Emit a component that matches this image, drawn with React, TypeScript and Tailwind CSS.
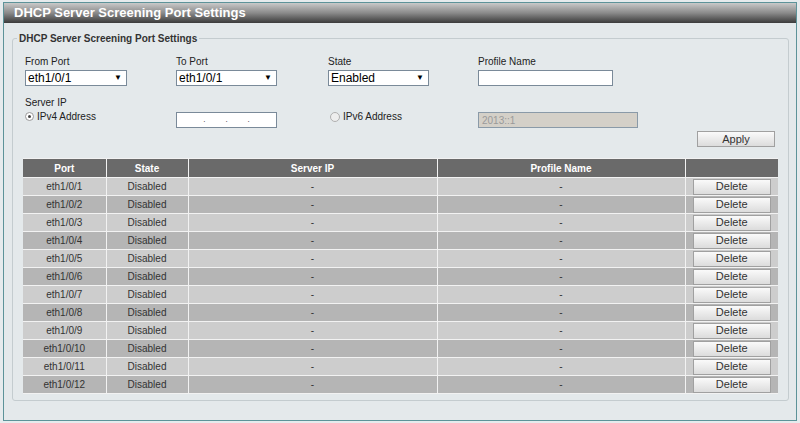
import React from "react";

const ports = Array.from({ length: 12 }, (_, i) => `eth1/0/${i + 1}`);

function Select({ value, w }: { value: string; w: string }) {
  return (
    <div className={`${w} h-[16px] bg-white border border-[#7a8a99] flex items-center justify-between pl-[2px] pr-[4px] text-[12px] text-black leading-none`}>
      <span>{value}</span>
      <span className="text-[8px]">▼</span>
    </div>
  );
}

function Btn({ label, w }: { label: string; w: string }) {
  return (
    <div className={`${w} h-[16px] border border-[#a0a0a0] bg-gradient-to-b from-[#fafafa] to-[#dcdcdc] flex items-center justify-center text-[11px] text-[#333] leading-none`}>
      {label}
    </div>
  );
}

export default function App() {
  return (
    <div className="w-[800px] h-[423px] bg-[#e6ebed] pt-[2px] pl-[3px] pr-[3px] pb-[2px] font-['Liberation_Sans',Arial,sans-serif]">
      <div className="h-full border border-[#5d9399] flex flex-col bg-[#e4e9eb]">
        <div className="h-[20px] bg-gradient-to-b from-[#c9c9c9] via-[#8a8a8a] to-[#3c3c3c] flex items-center pl-[10px] text-white font-bold text-[13px]">
          DHCP Server Screening Port Settings
        </div>
        <div className="pl-[8px] pr-[7px] pt-[8px]">
          <fieldset className="border border-[#c4cccf] rounded-[3px] pl-[12px] pr-[10px] pb-[6px]">
            <legend className="ml-[-8px] px-[2px] text-[10px] font-bold text-[#333]">DHCP Server Screening Port Settings</legend>
            <div className="flex pt-[8px] text-[10px] text-[#222]">
              <div className="w-[151px]">
                <div className="mb-[1px]">From Port</div>
                <Select value="eth1/0/1" w="w-[102px]" />
              </div>
              <div className="w-[152px]">
                <div className="mb-[1px]">To Port</div>
                <Select value="eth1/0/1" w="w-[101px]" />
              </div>
              <div className="w-[150px]">
                <div className="mb-[1px]">State</div>
                <Select value="Enabled" w="w-[101px]" />
              </div>
              <div>
                <div className="mb-[1px]">Profile Name</div>
                <div className="w-[135px] h-[16px] bg-white border border-[#7a8a99]" />
              </div>
            </div>
            <div className="mt-[9px] text-[10px] leading-[15px] text-[#222]">Server IP</div>
            <div className="flex items-start text-[10px] text-[#222]">
              <div className="w-[151px] flex items-center gap-[3px] leading-[13px]">
                <div className="w-[9px] h-[9px] rounded-full border border-[#9a9a9a] bg-white flex items-center justify-center">
                  <div className="w-[3px] h-[3px] rounded-full bg-[#444]" />
                </div>
                <span>IPv4 Address</span>
              </div>
              <div className="w-[154px] pt-[2px]">
                <div className="w-[101px] h-[16px] bg-white border border-[#7a8a99] flex items-center justify-center gap-[20px] text-[8px]">
                  <span>.</span><span>.</span><span>.</span>
                </div>
              </div>
              <div className="w-[148px] flex items-center gap-[3px] leading-[13px]">
                <div className="w-[10px] h-[10px] rounded-full border border-[#b0b0b0] bg-[#eeeeee]" />
                <span>IPv6 Address</span>
              </div>
              <div className="pt-[2px]">
                <div className="w-[160px] h-[16px] bg-[#d4d0c8] border border-[#8a9aa8] flex items-center pl-[3px] text-[10px] text-[#9a9a9a]">2013::1</div>
              </div>
            </div>
            <div className="flex justify-end pr-[3px] mt-[3px]">
              <Btn label="Apply" w="w-[78px]" />
            </div>
            <table className="mt-[11px] ml-[-2px] w-[755px] border-collapse text-[10px] text-[#333] text-center">
              <thead>
                <tr className="bg-[#6a6a6a] text-white font-bold h-[19px]">
                  <th className="w-[83px] border-r border-b border-t border-[#f2f2f2]">Port</th>
                  <th className="w-[82px] border-r border-b border-t border-[#f2f2f2]">State</th>
                  <th className="w-[249px] border-r border-b border-t border-[#f2f2f2]">Server IP</th>
                  <th className="w-[248px] border-r border-b border-t border-[#f2f2f2]">Profile Name</th>
                  <th className="border-b border-t border-[#f2f2f2]"></th>
                </tr>
              </thead>
              <tbody>
                {ports.map((p, i) => (
                  <tr key={p} className={`h-[18px] ${i % 2 === 0 ? "bg-[#cdcdcd]" : "bg-[#b5b5b5]"}`}>
                    <td className="border-r border-b border-[#f2f2f2]">{p}</td>
                    <td className="border-r border-b border-[#f2f2f2]">Disabled</td>
                    <td className="border-r border-b border-[#f2f2f2]">-</td>
                    <td className="border-r border-b border-[#f2f2f2]">-</td>
                    <td className="border-b border-[#f2f2f2]">
                      <div className="flex justify-center">
                        <Btn label="Delete" w="w-[78px]" />
                      </div>
                    </td>
                  </tr>
                ))}
              </tbody>
            </table>
          </fieldset>
        </div>
      </div>
    </div>
  );
}
